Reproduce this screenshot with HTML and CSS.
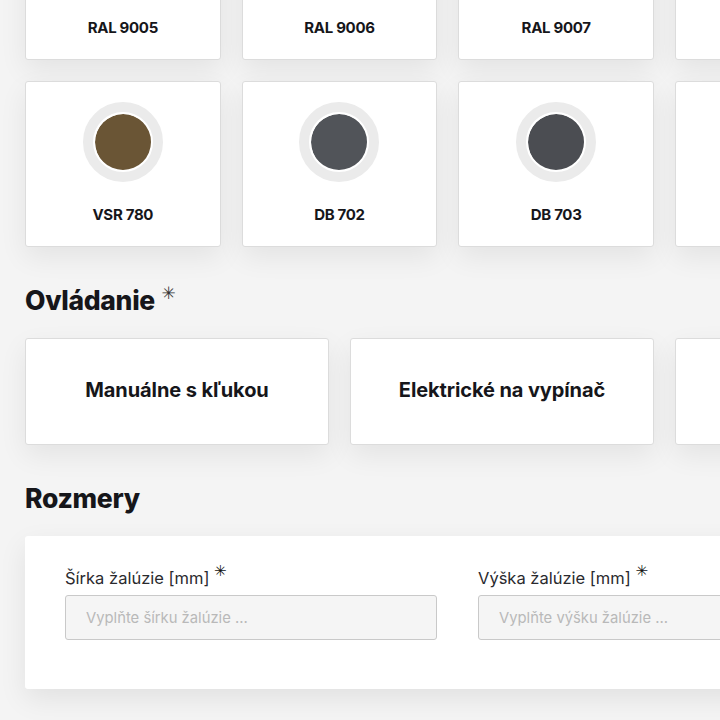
FILE: index.html
```html
<!DOCTYPE html>
<html lang="sk">
<head>
<meta charset="utf-8">
<title>Konfigurátor</title>
<link rel="stylesheet" href="styles.css">
</head>
<body>
<main class="page">
  <div class="swatches">
    <div class="swatch"><span class="dot" style="background-color:#0e0e10"></span><span class="swatch-name">RAL 9005</span></div>
    <div class="swatch"><span class="dot" style="background-color:#a5a8a6"></span><span class="swatch-name">RAL 9006</span></div>
    <div class="swatch"><span class="dot" style="background-color:#8f8f8c"></span><span class="swatch-name">RAL 9007</span></div>
    <div class="swatch"><span class="dot" style="background-color:#f1ece1"></span><span class="swatch-name">RAL 9010</span></div>
    <div class="swatch"><span class="dot" style="background-color:#6a5535"></span><span class="swatch-name">VSR 780</span></div>
    <div class="swatch"><span class="dot" style="background-color:#515459"></span><span class="swatch-name">DB 702</span></div>
    <div class="swatch"><span class="dot" style="background-color:#4b4d52"></span><span class="swatch-name">DB 703</span></div>
    <div class="swatch"><span class="dot" style="background-color:#3c3f44"></span><span class="swatch-name">DB 704</span></div>
  </div>

  <h2 class="section-title">Ovládanie <span class="req">✳</span></h2>
  <div class="controls">
    <div class="option">Manuálne s kľukou</div>
    <div class="option">Elektrické na vypínač</div>
    <div class="option">Diaľkové ovládanie</div>
  </div>

  <h2 class="section-title">Rozmery</h2>
  <div class="panel">
    <div class="field">
      <label class="field-label">Šírka žalúzie [mm] <span class="req-small">✳</span></label>
      <input class="field-input" type="text" placeholder="Vyplňte šírku žalúzie ...">
    </div>
    <div class="field">
      <label class="field-label">Výška žalúzie [mm] <span class="req-small">✳</span></label>
      <input class="field-input" type="text" placeholder="Vyplňte výšku žalúzie ...">
    </div>
  </div>
</main>
</body>
</html>
```

FILE: styles.css
```css
html, body {
  margin: 0;
  padding: 0;
}
body {
  background: #f4f4f4;
  font-family: "Inter", "Lato", sans-serif;
  color: #16161a;
  overflow: hidden;
  width: 720px;
  height: 720px;
}
.page {
  padding-left: 25px;
  margin-top: -106px;
  width: 1400px;
}
.swatches {
  display: grid;
  grid-template-columns: repeat(4, 195.67px);
  gap: 21px;
}
.swatch {
  height: 166px;
  box-sizing: border-box;
  background: #fff;
  border: 1px solid #dcdcdc;
  border-radius: 3px;
  box-shadow: 0 10px 28px rgba(0, 0, 0, 0.07);
  display: flex;
  flex-direction: column;
  align-items: center;
  padding-top: 20px;
}
.dot {
  box-sizing: border-box;
  width: 80px;
  height: 80px;
  border-radius: 50%;
  border: 10.5px solid #ebebeb;
  padding: 1.5px;
  background-clip: content-box;
  box-shadow: inset 0 0 0 2px #fff;
}
.swatch-name {
  margin-top: 23px;
  font-size: 15px;
  font-weight: 700;
  line-height: 20px;
  letter-spacing: -0.3px;
}
.section-title {
  margin: 38px 0 23px;
  font-size: 26.5px;
  line-height: 30px;
  height: 30px;
  font-weight: 800;
  letter-spacing: -0.3px;
}
.req {
  display: inline-block;
  font-size: 17px;
  line-height: 0;
  font-weight: 400;
  vertical-align: 11px;
  margin-left: 1px;
  color: #333;
  font-family: "DejaVu Sans", sans-serif;
}
.controls {
  display: grid;
  grid-template-columns: repeat(3, 304px);
  gap: 21px;
}
.option {
  height: 107px;
  box-sizing: border-box;
  padding-bottom: 3px;
  background: #fff;
  border: 1px solid #dcdcdc;
  border-radius: 3px;
  box-shadow: 0 10px 28px rgba(0, 0, 0, 0.07);
  display: flex;
  align-items: center;
  justify-content: center;
  white-space: nowrap;
  font-size: 20px;
  font-weight: 700;
  letter-spacing: -0.1px;
}
.panel {
  background: #fff;
  border-radius: 3px;
  box-shadow: 0 10px 28px rgba(0, 0, 0, 0.08);
  padding: 32px 40px 49px;
  display: grid;
  grid-template-columns: repeat(2, 372px);
  column-gap: 41px;
}
.field {
  display: flex;
  flex-direction: column;
}
.field-label {
  font-size: 16.5px;
  line-height: 20px;
  height: 20px;
  font-weight: 400;
  color: #2a2a2e;
  margin-bottom: 7px;
}
.req-small {
  display: inline-block;
  line-height: 0;
  font-size: 15px;
  vertical-align: 8px;
  font-family: "DejaVu Sans", sans-serif;
  color: #111;
}
.field-input {
  height: 45px;
  box-sizing: border-box;
  border: 1px solid #c9c9c9;
  border-radius: 3px;
  background: #f5f5f5;
  padding: 0 20px;
  font-family: "Inter", sans-serif;
  font-size: 14.8px;
  color: #333;
  outline: none;
}
.field-input::placeholder {
  color: #b9b9b9;
}
```
